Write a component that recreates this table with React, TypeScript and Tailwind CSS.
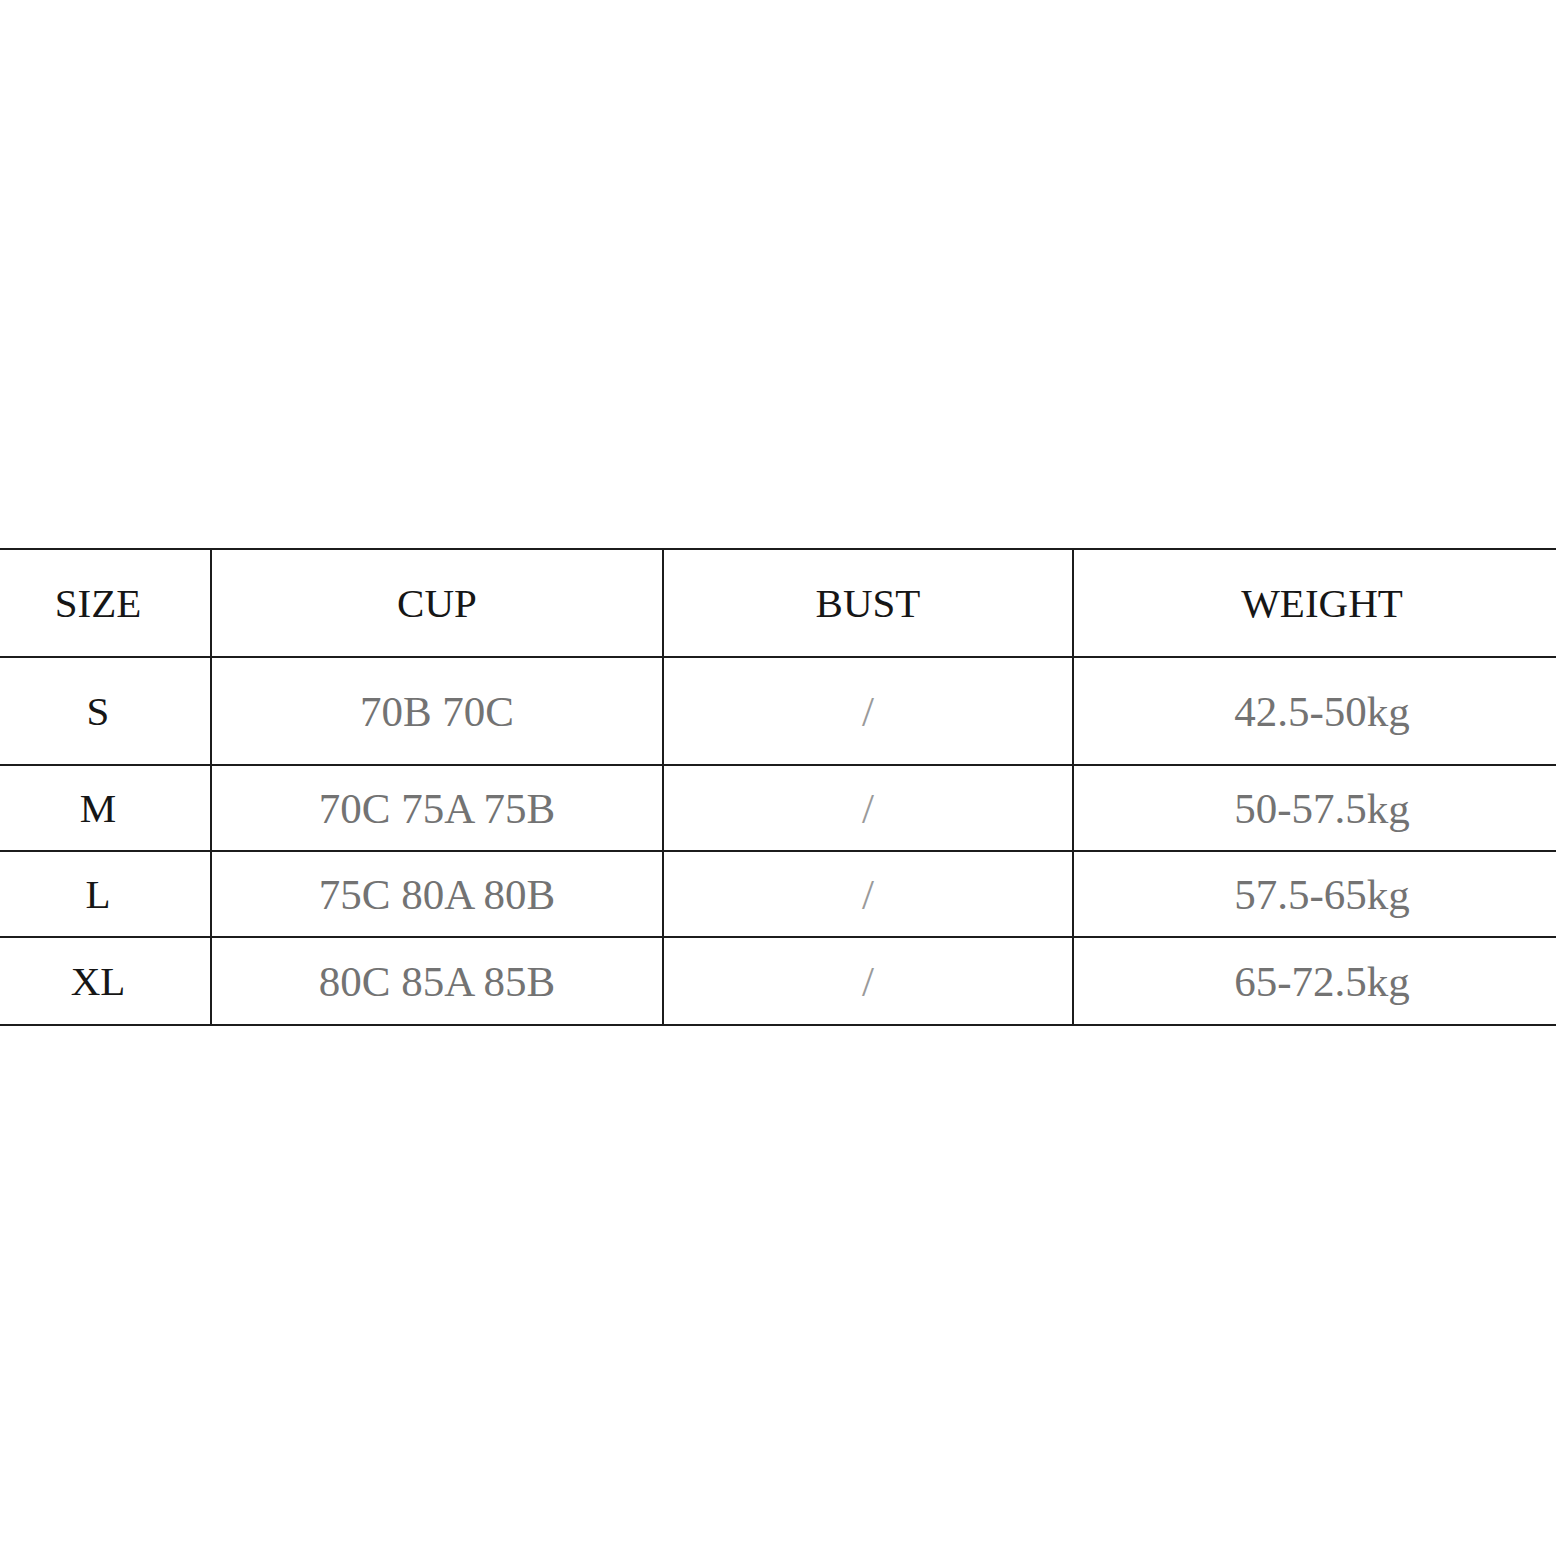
import React from "react";

const rows = [
  { size: "S", cup: "70B 70C", bust: "/", weight: "42.5-50kg", h: "h-[108px]" },
  { size: "M", cup: "70C 75A 75B", bust: "/", weight: "50-57.5kg", h: "h-[86px]" },
  { size: "L", cup: "75C 80A 80B", bust: "/", weight: "57.5-65kg", h: "h-[86px]" },
  { size: "XL", cup: "80C 85A 85B", bust: "/", weight: "65-72.5kg", h: "h-[88px]" },
];

const cell = "border-2 border-[#1c1c1c] text-center align-middle p-0";

export default function App() {
  return (
    <div
      className="h-[1556px] w-[1556px] overflow-hidden bg-white pt-[548px]"
      style={{ fontFamily: '"Liberation Serif", "Times New Roman", serif' }}
    >
      <table className="-ml-[16px] w-[1586px] table-fixed border-collapse text-[41px] leading-none">
        <colgroup>
          <col className="w-[226px]" />
          <col className="w-[452px]" />
          <col className="w-[410px]" />
          <col className="w-[498px]" />
        </colgroup>
        <thead>
          <tr className="h-[108px] text-[#161616]">
            <th className={`${cell} font-normal`}>SIZE</th>
            <th className={`${cell} font-normal`}>CUP</th>
            <th className={`${cell} font-normal`}>BUST</th>
            <th className={`${cell} font-normal`}>WEIGHT</th>
          </tr>
        </thead>
        <tbody>
          {rows.map((r) => (
            <tr key={r.size} className={r.h}>
              <td className={`${cell} text-[#161616]`}>{r.size}</td>
              <td className={`${cell} text-[43px] text-[#737373]`}>{r.cup}</td>
              <td className={`${cell} text-[43px] text-[#9a9a9a]`}>{r.bust}</td>
              <td className={`${cell} text-[43px] text-[#737373]`}>{r.weight}</td>
            </tr>
          ))}
        </tbody>
      </table>
    </div>
  );
}
